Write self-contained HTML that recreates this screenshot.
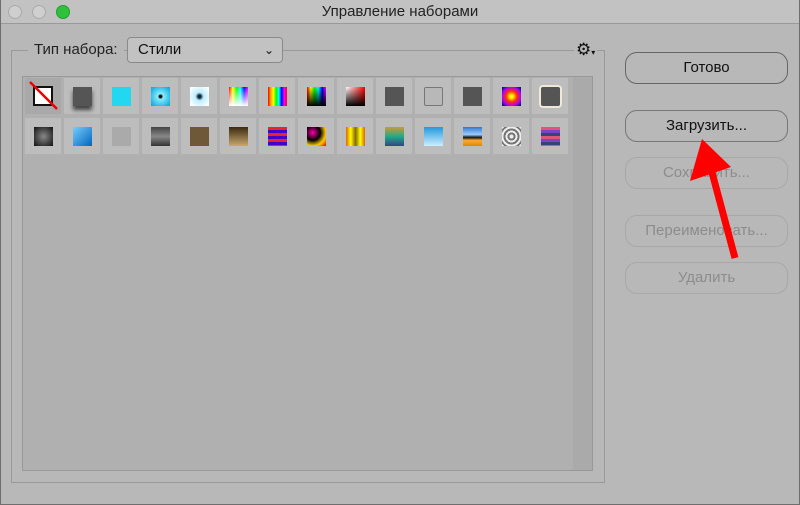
<!DOCTYPE html>
<html><head><meta charset="utf-8"><style>
*{margin:0;padding:0;box-sizing:border-box}
body{width:800px;height:505px;background:#b8b8b8;font-family:"Liberation Sans","DejaVu Sans",sans-serif;position:relative;overflow:hidden}
.win{position:absolute;left:0;top:0;width:800px;height:505px;border:1px solid #6e6e6e;border-top:none}
.title{position:absolute;left:0;top:0;width:800px;height:24px;background:#c2c2c2;border-bottom:1px solid #999;text-align:center;font-size:15px;line-height:24px;color:#222}
.tl{position:absolute;top:5px;width:14px;height:14px;border-radius:50%;background:#cfcfcf;border:1px solid #aaa}
.fs{position:absolute;left:11px;top:50px;width:594px;height:433px;border:1px solid #999}
.lbl{position:absolute;left:28px;top:40px;background:#b8b8b8;padding:0 6px;font-size:15px;color:#222;line-height:20px}
.dd{position:absolute;left:127px;top:37px;width:156px;height:26px;border:1px solid #8a8a8a;border-radius:4px;background:#c2c2c2;font-size:15px;line-height:24px;padding-left:10px;color:#111}
.panel{position:absolute;left:22px;top:76px;width:571px;height:395px;background:#b0b0b0;border:1px solid #999}
.scroll{position:absolute;left:573px;top:77px;width:19px;height:393px;background:#aaa}
.tile{position:absolute;width:36px;height:36px;background:#bdbdbd}
.ic{position:absolute;left:9px;top:9px;width:19px;height:19px}
.btn{position:absolute;left:625px;width:163px;height:32px;border:1.5px solid #666;border-radius:12px;font-size:15px;text-align:center;line-height:29px;color:#111}
.dis{border:1px solid #a8a8a8;color:#8c8c8c}
</style></head><body>
<div class="title">Управление наборами</div>
<div class="tl" style="left:8px"></div>
<div class="tl" style="left:32px"></div>
<div class="tl" style="left:56px;background:#2fc03c;border-color:#22a030"></div>
<div class="win"></div>
<div class="fs"></div>
<div class="lbl">Тип набора:</div>
<div class="dd">Стили<span style="position:absolute;right:8px;top:0;font-size:12px">⌄</span></div>
<div style="position:absolute;left:574px;top:40px;font-size:17px;font-weight:bold;color:#111;background:#b8b8b8;padding:0 2px">⚙<span style="font-size:8px">▾</span></div>
<div class="panel"></div>
<div class="scroll"></div>
<div id="g"></div>
<div class="tile" style="left:25px;top:78px;background:#a9a9a9"><div class="ic" style="background:#fff;border:2px solid #111;left:8px;top:8px;width:20px;height:20px"></div><svg style="position:absolute;left:0;top:0" width="36" height="36"><line x1="5" y1="4" x2="32" y2="31" stroke="#e00" stroke-width="2.5"/></svg></div>
<script>
var r1=["","#555","#22d8f0","radial-gradient(#111 10%,#8ef 20%,#1ad 90%)","radial-gradient(#123 10%,#bef 30%,#fff 90%)","linear-gradient(#fff0,#fff),linear-gradient(90deg,red,yellow,lime,cyan,blue,magenta)","linear-gradient(90deg,red,orange,yellow,lime,cyan,blue,magenta,red)","linear-gradient(#fff0,#000),linear-gradient(90deg,red,yellow,lime,cyan,blue,magenta)","linear-gradient(#0000,#000),linear-gradient(90deg,#fff,red)","#555","#b8b8b8","#555","radial-gradient(#ff0 10%,#f30 40%,#a0f 70%,#118 90%)","#555"];
var r2=["radial-gradient(#888,#111)","linear-gradient(135deg,#7cf,#06b)","#aaa","linear-gradient(#444,#888,#333)","#6e5838","linear-gradient(#3a2a10,#c9a870)","repeating-linear-gradient(#e22 0 3px,#40c 3px 6px)","radial-gradient(circle at 30% 30%,#f0a,#000 40%,#fc0 70%,#d00)","linear-gradient(90deg,#d60,#ff0,#860,#ff0,#d60)","linear-gradient(#c93,#2a8 50%,#348)","linear-gradient(#29d,#cef)","linear-gradient(#37c,#9cf 40%,#111 55%,#fa3 70%,#d80)","repeating-radial-gradient(#eee 0 2px,#777 2px 4px)","repeating-linear-gradient(#d57 0 3px,#74c 3px 6px,#347 6px 9px)"];
var h="";
for(var i=0;i<14;i++){var x=25+i*39;
if(i>0){var st="background:"+r1[i];if(i==10)st+=";border:1px solid #777;border-radius:2px";if(i==13)st+=";box-shadow:0 0 0 2px #eee9d8;border-radius:2px";if(i==1)st+=";box-shadow:0 4px 4px #444";
h+='<div class="tile" style="left:'+x+'px;top:78px"><div class="ic" style="'+st+'"></div></div>';}
h+='<div class="tile" style="left:'+x+'px;top:118px"><div class="ic" style="background:'+r2[i]+'"></div></div>';}
document.getElementById("g").innerHTML=h;
</script>
<div class="btn" style="top:52px">Готово</div>
<div class="btn" style="top:110px;border-width:1px;border-color:#777">Загрузить...</div>
<div class="btn dis" style="top:157px">Сохранить...</div>
<div class="btn dis" style="top:215px">Переименовать...</div>
<div class="btn dis" style="top:262px">Удалить</div>
<svg style="position:absolute;left:0;top:0" width="800" height="505"><line x1="735" y1="258" x2="710" y2="165" stroke="#f00" stroke-width="7"/><polygon points="702,139 690,181 731,167" fill="#f00"/></svg>
</body></html>
